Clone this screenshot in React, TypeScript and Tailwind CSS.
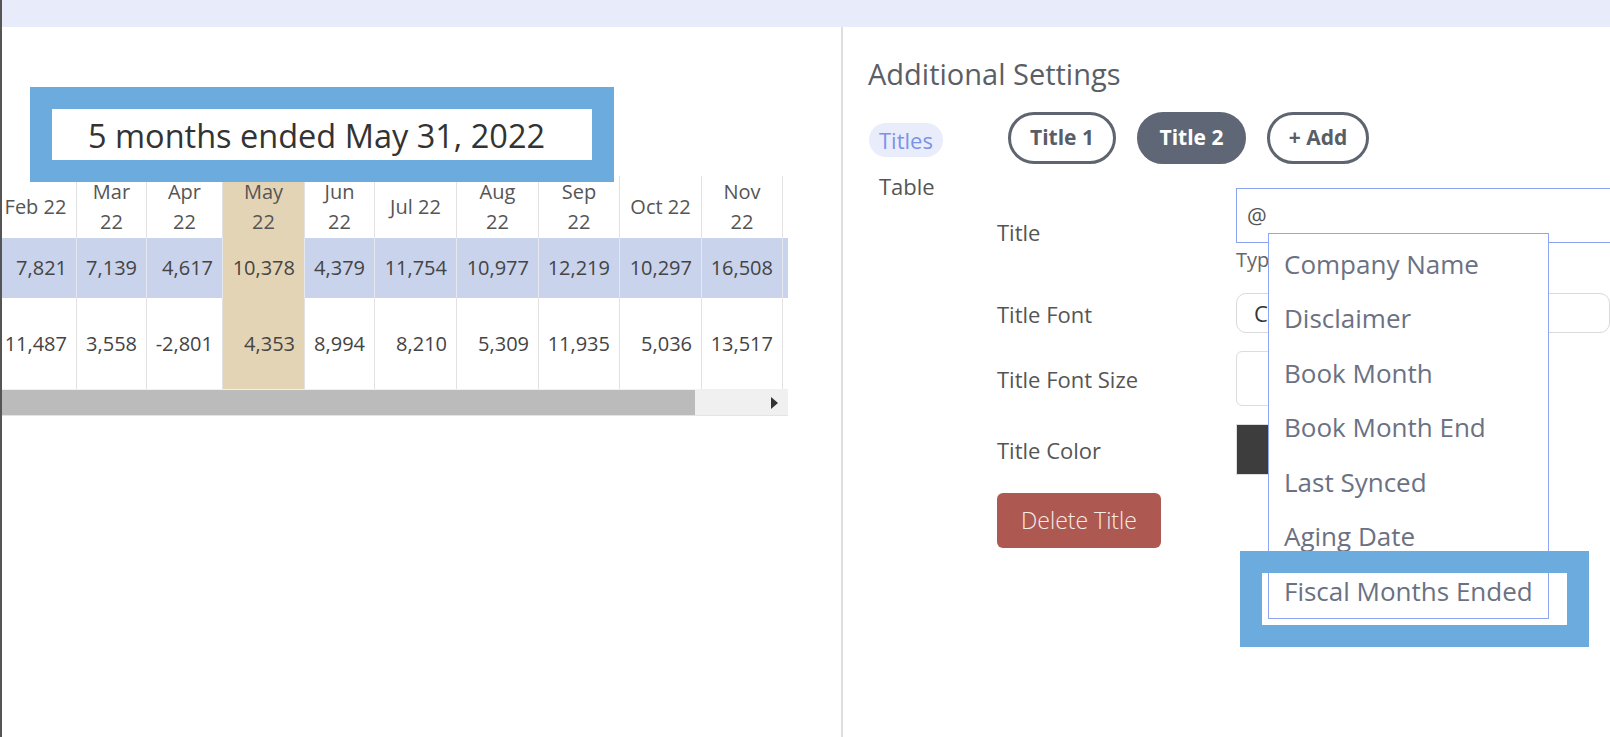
import React from "react";

const widths = [82, 70, 76, 82, 70, 82, 82, 81, 82, 81, 82];
const headers: string[][] = [
  ["Feb 22"],
  ["Mar", "22"],
  ["Apr", "22"],
  ["May", "22"],
  ["Jun", "22"],
  ["Jul 22"],
  ["Aug", "22"],
  ["Sep", "22"],
  ["Oct 22"],
  ["Nov", "22"],
  [],
];
const row1 = ["7,821", "7,139", "4,617", "10,378", "4,379", "11,754", "10,977", "12,219", "10,297", "16,508", ""];
const row2 = ["11,487", "3,558", "-2,801", "4,353", "8,994", "8,210", "5,309", "11,935", "5,036", "13,517", ""];
const MAY = 3;

const menu = [
  "Company Name",
  "Disclaimer",
  "Book Month",
  "Book Month End",
  "Last Synced",
  "Aging Date",
  "Fiscal Months Ended",
];

export default function App() {
  return (
    <div className="relative flex w-[1610px] h-[737px] overflow-hidden bg-white font-['Open_Sans',sans-serif]">
      <div className="w-[2px] shrink-0 bg-[#555555]" />
      <div className="flex flex-col flex-1 min-w-0">
        <div className="h-[27px] shrink-0 bg-[#e8ebf9]" />
        <div className="flex flex-1 min-h-0">
          {/* Left panel */}
          <div className="w-[839px] shrink-0 pt-[87px]">
            <div className="pl-[86px] text-[32.5px] leading-[44px] text-[#333333] whitespace-nowrap">
              5 months ended May 31, 2022
            </div>
            <div className="mt-[18px] w-[786px] overflow-hidden">
              <div className="ml-[-7px] w-max">
                {/* header */}
                <div className="flex h-[62px]">
                  {headers.map((h, i) => (
                    <div
                      key={i}
                      style={{ width: widths[i] }}
                      className={`shrink-0 border-r border-[#e2e2e2] flex flex-col items-center justify-center text-[20px] leading-[30px] text-[#555555] ${
                        i === MAY ? "bg-[#e4d4b6]" : ""
                      }`}
                    >
                      {h.map((l, j) => (
                        <span key={j} className="whitespace-nowrap">
                          {l}
                        </span>
                      ))}
                    </div>
                  ))}
                </div>
                {/* row 1 */}
                <div className="flex h-[60px] bg-[#c9d3ec]">
                  {row1.map((v, i) => (
                    <div
                      key={i}
                      style={{ width: widths[i] }}
                      className={`shrink-0 border-r border-[#e6e8ef] flex items-center justify-end pr-[9px] text-[20px] text-[#444444] ${
                        i === MAY ? "bg-[#e4d4b6]" : ""
                      }`}
                    >
                      {v}
                    </div>
                  ))}
                </div>
                {/* row 2 */}
                <div className="flex h-[91px]">
                  {row2.map((v, i) => (
                    <div
                      key={i}
                      style={{ width: widths[i] }}
                      className={`shrink-0 border-r border-[#e2e2e2] flex items-center justify-end pr-[9px] text-[20px] text-[#444444] ${
                        i === MAY ? "bg-[#e4d4b6]" : ""
                      }`}
                    >
                      {v}
                    </div>
                  ))}
                </div>
              </div>
              {/* scrollbar */}
              <div className="relative h-[27px] bg-[#f0f0f0] border-b border-[#e4e4e4]">
                <div className="absolute left-0 top-[1px] h-[25px] w-[693px] bg-[#bbbbbb]" />
                <svg className="absolute left-[769px] top-[8px]" width="8" height="12" viewBox="0 0 8 12">
                  <polygon points="0,0 7,6 0,12" fill="#333333" />
                </svg>
              </div>
            </div>
          </div>
          {/* divider */}
          <div className="w-[2px] shrink-0 bg-[#dedede]" />
          {/* Right panel */}
          <div className="flex-1 min-w-0 pl-[25px] pt-[28px]">
            <h2 className="text-[29px] leading-[38px] text-[#5a5e66] whitespace-nowrap">Additional Settings</h2>
            <div className="mt-[19px] flex">
              <div className="w-[129px] shrink-0 pt-[11px] flex flex-col gap-[12px]">
                <div className="ml-[1px] w-fit h-[34px] px-[10px] rounded-full bg-[#e9edfb] text-[#7b93e6] text-[22px] leading-[34px]">
                  Titles
                </div>
                <div className="ml-[1px] w-fit h-[34px] px-[10px] text-[#555555] text-[22px] leading-[34px]">
                  Table
                </div>
              </div>
              <div className="flex-1 min-w-0">
                <div className="pl-[11px] flex gap-[21px]">
                  <button className="w-[108px] h-[52px] rounded-full border-[3px] border-[#5f6570] bg-white text-[#585d68] text-[21px] font-bold">
                    Title 1
                  </button>
                  <button className="w-[109px] h-[52px] rounded-full border-[3px] border-[#5f6675] bg-[#5f6675] text-white text-[21px] font-bold">
                    Title 2
                  </button>
                  <button className="w-[102px] h-[52px] rounded-full border-[3px] border-[#5f6570] bg-white text-[#585d68] text-[21px] font-bold">
                    + Add
                  </button>
                </div>

                {/* Title row */}
                <div className="mt-[24px] flex items-center">
                  <div className="w-[239px] shrink-0 pt-[3px] text-[22px] text-[#555555]">Title</div>
                  <div className="relative">
                    <div className="w-[420px] h-[55px] border border-[#8aa2f2] flex items-center pl-[10px] text-[22px] text-[#555555]">
                      @
                    </div>
                    <div className="mt-[3px] h-[28px] text-[20px] leading-[28px] text-[#666666] whitespace-nowrap">
                      Type @ for variables
                    </div>
                    {/* dropdown */}
                    <div className="absolute left-[32px] top-[45px] z-10 w-[281px] h-[386px] border border-[#8ea6f4] bg-white pt-[3px]">
                      {menu.map((m) => (
                        <div
                          key={m}
                          className="h-[54.5px] flex items-center pl-[15px] text-[26px] text-[#6b7183] whitespace-nowrap"
                        >
                          {m}
                        </div>
                      ))}
                    </div>
                  </div>
                </div>

                {/* Title Font */}
                <div className="mt-[19px] flex items-center">
                  <div className="w-[239px] shrink-0 pt-[3px] text-[22px] text-[#555555]">Title Font</div>
                  <div className="w-[420px] h-[40px] rounded-[10px] border border-[#d9d9d9] flex items-center pl-[17px] text-[22px] text-[#333333]">
                    Calibri
                  </div>
                </div>

                {/* Title Font Size */}
                <div className="mt-[18px] flex items-center">
                  <div className="w-[239px] shrink-0 pt-[2px] text-[22px] text-[#555555]">Title Font Size</div>
                  <div className="w-[300px] h-[55px] rounded-[6px] border border-[#dddddd]" />
                </div>

                {/* Title Color */}
                <div className="mt-[18px] flex items-center">
                  <div className="w-[239px] shrink-0 pt-[2px] text-[22px] text-[#555555]">Title Color</div>
                  <div className="w-[120px] h-[51px] bg-[#3d3d3d] border border-[#dddddd]" />
                </div>

                <button className="mt-[18px] w-[164px] h-[55px] rounded-[6px] bg-[#ad5951] text-[#f8ece9] text-[23px] font-light">
                  Delete Title
                </button>
              </div>
            </div>
          </div>
        </div>
      </div>

      {/* annotation highlight frames */}
      <div className="absolute left-[30px] top-[87px] w-[584px] h-[95px] border-[22px] border-[#6cabdd] z-20" />
      <div className="absolute left-[1240px] top-[551px] w-[349px] h-[96px] border-[22px] border-[#6cabdd] z-20" />
    </div>
  );
}
